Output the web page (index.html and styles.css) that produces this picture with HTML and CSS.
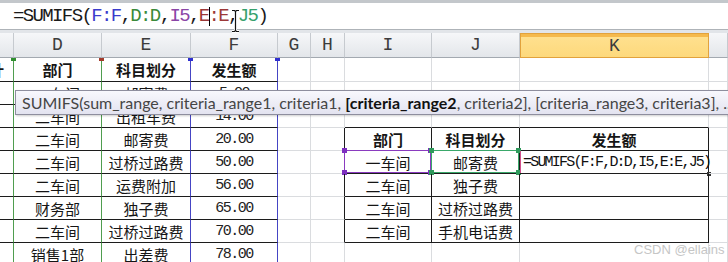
FILE: index.html
```html
<!DOCTYPE html>
<html lang="zh">
<head>
  <meta charset="UTF-8">
  <meta name="viewport" content="width=device-width, initial-scale=1.0">
  <link rel="stylesheet" href="styles.css">
  <title>SUMIFS</title>
</head>
<body>
  <div id="app">
    <div class="topStrip"></div>
    <div class="formulaBar">=SUMIFS(<span class="rf">F:F</span>,<span class="rd">D:D</span>,<span class="ri">I5</span>,<span class="re">E</span><span class="caret"></span><span class="re">:E</span>,<span class="rj">J5</span>)</div>
    <div class="barSep"></div>

    <div class="sheet">
      <!-- column headers -->
      <div class="hd"></div><div class="hd">D</div><div class="hd">E</div><div class="hd">F</div><div class="hd">G</div><div class="hd">H</div><div class="hd">I</div><div class="hd">J</div><div class="hd hdOn">K</div><div class="hd"></div>

      <!-- row 1 -->
      <div class="bb vg mkG b"><span class="frag">计</span></div><div class="bb vg mkR b">部门</div><div class="bb vb mkB b">科目划分</div><div class="bb vb mkB b">发生额</div><div></div><div></div><div></div><div></div><div></div><div></div>
      <!-- row 2 -->
      <div class="bb vg"></div><div class="bb vg">一车间</div><div class="bb vb">邮寄费</div><div class="bb vb n">5.00</div><div></div><div></div><div></div><div></div><div></div><div></div>
      <!-- row 3 -->
      <div class="bb vg"></div><div class="bb vg">二车间</div><div class="bb vb">出租车费</div><div class="bb vb n">14.00</div><div></div><div></div><div class="bb"></div><div class="bb"></div><div class="bb"></div><div></div>
      <!-- row 4 -->
      <div class="bb vg"></div><div class="bb vg">二车间</div><div class="bb vb">邮寄费</div><div class="bb vb n">20.00</div><div></div><div class="vk"></div><div class="bb vk b">部门</div><div class="bb vk b">科目划分</div><div class="bb vk b">发生额</div><div></div>
      <!-- row 5 -->
      <div class="bb vg"></div><div class="bb vg">二车间</div><div class="bb vb">过桥过路费</div><div class="bb vb n">50.00</div><div></div><div class="vk"></div><div class="bb vk selI">一车间</div><div class="bb vk selJ">邮寄费</div><div class="bb vk active"><span class="edit">=SUMIFS(F:F,D:D,I5,E:E,J5)</span></div><div></div>
      <!-- row 6 -->
      <div class="bb vg"></div><div class="bb vg">二车间</div><div class="bb vb">运费附加</div><div class="bb vb n">56.00</div><div></div><div class="vk"></div><div class="bb vk">二车间</div><div class="bb vk">独子费</div><div class="bb vk"></div><div></div>
      <!-- row 7 -->
      <div class="bb vg"></div><div class="bb vg">财务部</div><div class="bb vb">独子费</div><div class="bb vb n">65.00</div><div></div><div class="vk"></div><div class="bb vk">二车间</div><div class="bb vk">过桥过路费</div><div class="bb vk"></div><div></div>
      <!-- row 8 -->
      <div class="bb vg"></div><div class="bb vg">二车间</div><div class="bb vb">过桥过路费</div><div class="bb vb n">70.00</div><div></div><div class="vk"></div><div class="bb vk">二车间</div><div class="bb vk">手机电话费</div><div class="bb vk"></div><div></div>
      <!-- row 9 -->
      <div class="bb vg"></div><div class="bb vg">销售1部</div><div class="bb vb">出差费</div><div class="bb vb n">78.00</div><div></div><div></div><div></div><div></div><div></div><div></div>
    </div>

    <div class="tip"><span>SUMIFS(sum_range, criteria_range1, criteria1, <b>[criteria_range2</b>, criteria2], [criteria_range3, criteria3], ...)</span></div>

    <svg class="ibeam" width="11" height="24" viewBox="0 0 11 24">
      <path d="M2 1.5h2.5l1 1 1-1H9M5.5 2.5v19M2 22.5h2.5l1-1 1 1H9" stroke="#fff" stroke-width="3" fill="none"/>
      <path d="M2 1.5h2.5l1 1 1-1H9M5.5 2.5v19M2 22.5h2.5l1-1 1 1H9" stroke="#111" stroke-width="1.2" fill="none"/>
    </svg>

    <div class="wm">CSDN @ellains</div>
  </div>
</body>
</html>
```

FILE: styles.css
```css
/* feuille excel, SUMIFS en cours de saisie */
*{box-sizing: border-box;}
body{margin: 0;
  background-color: #fff;
}
#app
{
  position: relative;
  width: 728px;
  height: 262px;
  overflow: hidden;
  font-family: "Noto Sans CJK SC", sans-serif;
}
.topStrip
{
  height: 3px;
  background-color: #c3c7cb;
}
.formulaBar
{
  display: flex;
  align-items: center;
  height: 26px;
  padding-left: 13px;
  white-space: nowrap;
  font-family: "Liberation Mono", monospace;
  font-size: 19px;
  letter-spacing: -1.63px;
  color: #1a1a1a;
}
.rf{color: #3b3bcc;}
.rd{color: #3a8a3a;}
.ri{color: #8a45a6;}
.re{color: #9c3838;}
.rj{color: #35a06c;}
.caret
{
  display: inline-block;
  width: 1px;
  height: 19px;
  margin-right: -1px;
  background-color: #000;
}
.barSep
{
  height: 4px;
  border-top: 1px solid #aeb3b8;
  background-color: #e2e5e9;
}

/* grille */
.sheet
{
  display: grid;
  grid-template-columns: 14px 88px 89px 87px 33px 34px 87px 88px 189px 1fr;
  grid-template-rows: 25px 24px repeat(8, 23px);
}
.sheet > div
{
  position: relative;
  display: flex;
  align-items: center;
  justify-content: center;
  white-space: nowrap;
  font-size: 15px;
  color: #151515;
  border-right: 1px solid #dadcdf;
  border-bottom: 1px solid #dadcdf;
}
.sheet .hd
{
  font-family: "Liberation Mono", monospace;
  font-size: 18px;
  color: #3c3c3c;
  border-right-color: #c6cacf;
  border-bottom-color: #a3a9b0;
  background: linear-gradient(#f6f7f9, #e3e6ea);
}
.sheet .hdOn
{
  border: 1px solid #e2a23c;
  background: linear-gradient(#f5b94c 0, #f5b94c 3px, #ffe08e 3px, #fdd97c);
}
.sheet .bb{border-bottom-color: #1c1c1c;}
.sheet .vg{border-right-color: #4f9d4f;}
.sheet .vb{border-right-color: #4545c4;}
.sheet .vk{border-right-color: #1c1c1c;}
.sheet .b{font-weight: 700;}
.sheet .n
{
  font-family: "Liberation Mono", monospace;
  letter-spacing: -1.5px;
  color: #222;
}
.frag{margin-right: 20px;}

/* petits reperes en haut des plages */
.mkG::after, .mkR::after, .mkB::after
{
  content: "";
  position: absolute;
  top: 0;
  right: -3px;
  width: 5px;
  height: 3px;
  background-color: #2f8f2f;
}
.mkR::after{background-color: #a33a2a;}
.mkB::after{background-color: #2f2fd0;}

/* cellules referencees */
.selI::before, .selJ::before
{
  content: "";
  position: absolute;
  top: -1px;
  left: -1px;
  right: 0;
  bottom: 0;
  border: 1px solid #8a3bbf;
}
.selJ::before{border-color: #3aa86a;}
.selI::after, .selJ::after
{
  content: "";
  position: absolute;
  top: -3px;
  left: -3px;
  right: -2px;
  bottom: -2px;
  background:
    linear-gradient(#7d2fc0, #7d2fc0) left top / 5px 5px no-repeat,
    linear-gradient(#7d2fc0, #7d2fc0) right top / 5px 5px no-repeat,
    linear-gradient(#7d2fc0, #7d2fc0) left bottom / 5px 5px no-repeat,
    linear-gradient(#7d2fc0, #7d2fc0) right bottom / 5px 5px no-repeat;
}
.selJ::after
{
  background:
    linear-gradient(#2f9a5c, #2f9a5c) left top / 5px 5px no-repeat,
    linear-gradient(#2f9a5c, #2f9a5c) right top / 5px 5px no-repeat,
    linear-gradient(#2f9a5c, #2f9a5c) left bottom / 5px 5px no-repeat,
    linear-gradient(#2f9a5c, #2f9a5c) right bottom / 5px 5px no-repeat;
}
.sheet .active
{
  justify-content: flex-start;
  overflow: visible;
}
.active::before
{
  content: "";
  position: absolute;
  top: 0;
  bottom: 0;
  left: 0;
  width: 1px;
  background-color: #d0508a;
}
.active::after
{
  content: "";
  position: absolute;
  right: -3px;
  bottom: -3px;
  width: 4px;
  height: 4px;
  background-color: #333;
}
.edit
{
  position: relative;
  z-index: 1;
  padding-left: 3px;
  font-family: "Liberation Mono", monospace;
  font-size: 15px;
  letter-spacing: -1.8px;
  color: #111;
}

/* info-bulle de la fonction */
.tip
{
  position: absolute;
  top: 90px;
  left: 15px;
  width: 800px;
  height: 25px;
  padding-left: 6px;
  line-height: 23px;
  white-space: nowrap;
  font-family: Lato, sans-serif;
  font-size: 16px;
  color: #454545;
  border: 1px solid #8e8e9e;
  background: linear-gradient(#f8f8fd, #e3e3f0);
  box-shadow: 1px 1px 2px rgba(0, 0, 0, .2);
}
.tip b{color: #111;}

.ibeam
{
  position: absolute;
  top: 9px;
  left: 230px;
}
.wm
{
  position: absolute;
  top: 242px;
  left: 634px;
  font-family: "Liberation Sans", sans-serif;
  font-size: 13px;
  color: #c6c6c6;
}
```
